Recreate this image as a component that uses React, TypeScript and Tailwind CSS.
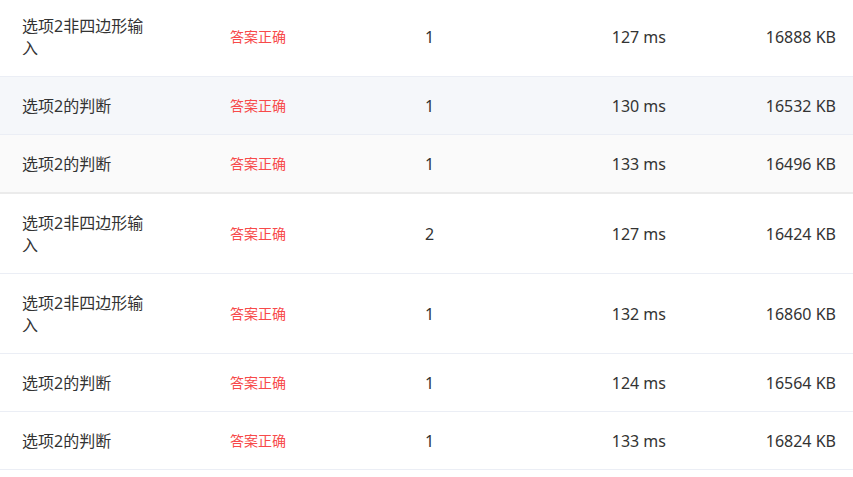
import React from "react";

type Row = { name: string; status: string; score: string; time: string; mem: string; bg: string; border: string };

const rows: Row[] = [
  { name: "选项2非四边形输入", status: "答案正确", score: "1", time: "127 ms", mem: "16888 KB", bg: "bg-white", border: "border-b border-[#ebeef5]" },
  { name: "选项2的判断", status: "答案正确", score: "1", time: "130 ms", mem: "16532 KB", bg: "bg-[#f5f7fa]", border: "border-b border-[#ebeef5]" },
  { name: "选项2的判断", status: "答案正确", score: "1", time: "133 ms", mem: "16496 KB", bg: "bg-[#fafafa]", border: "border-b-2 border-[#ebebeb]" },
  { name: "选项2非四边形输入", status: "答案正确", score: "2", time: "127 ms", mem: "16424 KB", bg: "bg-white", border: "border-b border-[#ebeef5]" },
  { name: "选项2非四边形输入", status: "答案正确", score: "1", time: "132 ms", mem: "16860 KB", bg: "bg-white", border: "border-b border-[#ebeef5]" },
  { name: "选项2的判断", status: "答案正确", score: "1", time: "124 ms", mem: "16564 KB", bg: "bg-white", border: "border-b border-[#ebeef5]" },
  { name: "选项2的判断", status: "答案正确", score: "1", time: "133 ms", mem: "16824 KB", bg: "bg-white", border: "border-b border-[#ebeef5]" },
];

export default function App() {
  return (
    <div
      className="w-[853px] h-[477px] overflow-hidden bg-white text-[#333]"
      style={{ fontFamily: '"Noto Sans", "Noto Sans CJK SC", sans-serif' }}
    >
      <div className="-mt-[3px]">
        {rows.map((r, i) => (
          <div
            key={i}
            className={`grid grid-cols-[208px_195px_91px_150px_170px] items-center pl-[22px] pr-[17px] py-[17.5px] ${r.bg} ${r.border}`}
          >
            <div className="max-w-[124px] text-[16px] leading-[22px]">{r.name}</div>
            <div className="text-[14px] leading-[22px] text-[#f74a4a]">{r.status}</div>
            <div className="text-[16px] leading-[22px]">{r.score}</div>
            <div className="text-right text-[16px] leading-[22px]">{r.time}</div>
            <div className="text-right text-[16px] leading-[22px]">{r.mem}</div>
          </div>
        ))}
      </div>
    </div>
  );
}
